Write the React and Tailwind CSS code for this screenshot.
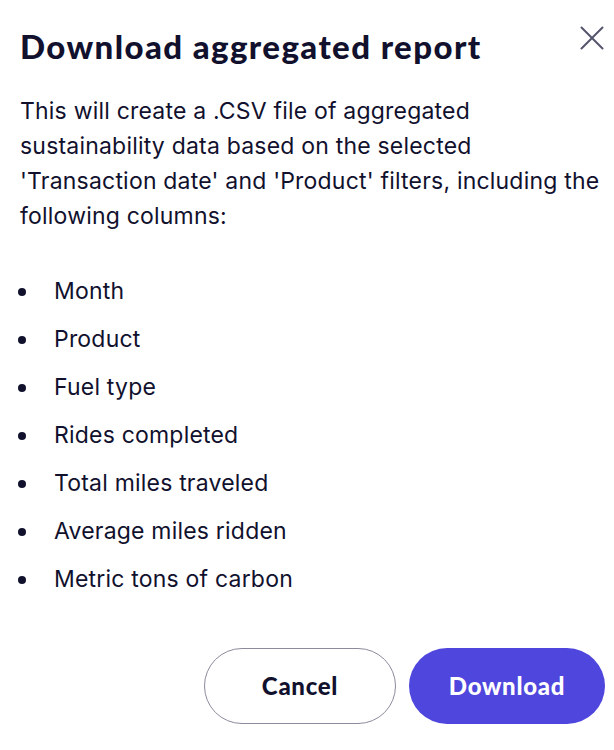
import { X } from 'lucide-react';

const columns = [
  'Month',
  'Product',
  'Fuel type',
  'Rides completed',
  'Total miles traveled',
  'Average miles ridden',
  'Metric tons of carbon',
];

const DownloadReportModal = () => {
  return (
    <div className="w-[614px] h-[750px] bg-white text-[#11112e] font-['Inter',sans-serif] relative">
      <button className="absolute top-[17px] right-[1px] w-[42px] h-[42px] flex items-center justify-center text-[#55556d]">
        <X className="w-[42px] h-[42px]" strokeWidth={1.15} />
      </button>

      <div className="pl-[20px] pr-[8px] pt-[26px]">
        <h2 className="font-['Lato',sans-serif] text-[33px] leading-[40px] font-black tracking-[1.4px]">
          Download aggregated report
        </h2>

        <p className="mt-[28px] text-[23px] leading-[35px] tracking-[0.2px]">
          This will create a .CSV file of aggregated sustainability data based on the selected
          'Transaction date' and 'Product' filters, including the following columns:
        </p>

        <ul className="mt-[40px] flex flex-col gap-[13px]">
          {columns.map((col) => (
            <li key={col} className="flex items-center text-[23px] leading-[35px] tracking-[0.2px]">
              <span className="w-[36px] ml-[-2px] flex">
                <span className="w-[8px] h-[8px] rounded-full bg-[#11112e]" />
              </span>
              {col}
            </li>
          ))}
        </ul>

        <div className="mt-[51px] flex justify-end gap-[13px]">
          <button className="w-[192px] h-[76px] rounded-full border border-[#8c8a9c] font-['Lato',sans-serif] text-[24px] font-black tracking-[0.7px]">
            Cancel
          </button>
          <button className="w-[196px] h-[76px] rounded-full bg-[#4f46dd] text-white font-['Lato',sans-serif] text-[24px] font-black tracking-[0.7px] mr-[1px]">
            Download
          </button>
        </div>
      </div>
    </div>
  );
};

export default function App() {
  return <DownloadReportModal />;
}
